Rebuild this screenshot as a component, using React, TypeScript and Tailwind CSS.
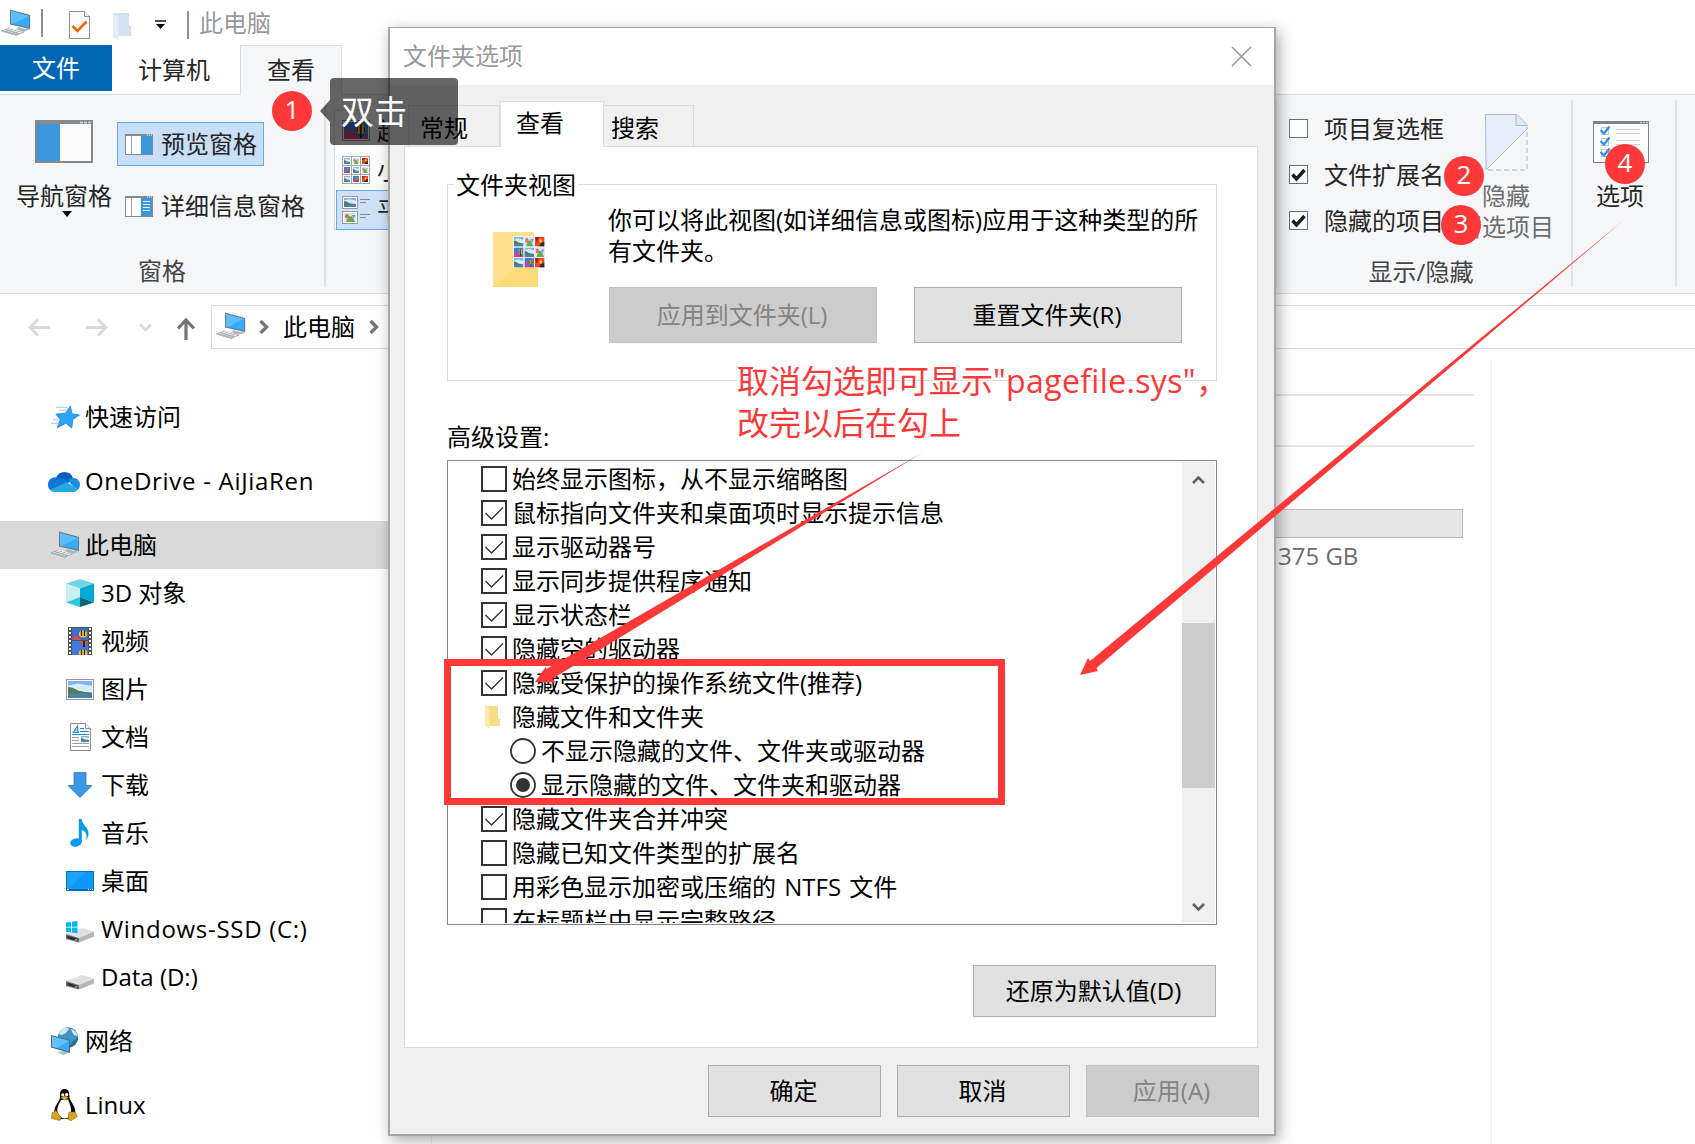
import React from "react";

const PcIcon: React.FC<{ className?: string }> = ({ className = "" }) => (
    <svg width="31" height="28" viewBox="0 0 31 28" className={className}>
        <path d="M0 22 L9 18.5 L25 23 L18 27 Z" fill="#eceff1" />
        <path d="M1 22.3 L9.5 19 M4 23.3 L13 20 M7.5 24.3 L17 21 M11 25.3 L20.5 22 M15 26.4 L24 23 M5 20.5 L19 25 M2 21.8 L17 26.4" stroke="#a3acb3" strokeWidth="1" fill="none" />
        <path d="M18 18 L25 20 L30 18.5 L29 21 L23 23 L17 20.5 Z" fill="#aeb7bd" />
        <path d="M27 4 L30.5 7 V20 L28 21 Z" fill="#cfd6da" />
        <path d="M10 0.5 L30 6 V20 L10 15.5 Z" fill="#6d7a82" />
        <path d="M11 2 L29 7 V18.6 L11 14.4 Z" fill="#35adff" />
        <path d="M11 2 L29 7 L13 14.8 L11 14.4 Z" fill="#5bbfff" />
    </svg>
);

const Picture: React.FC<{ x: number; y: number; w: number; h: number; kind: number }> = ({ x, y, w, h, kind }) => (
    <svg x={x} y={y} width={w} height={h} viewBox="0 0 20 14" preserveAspectRatio="none">
        {kind === 0 && (
            <>
                <rect width="20" height="14" fill="#7fb2f5" />
                <path d="M0 4 L8 2 L20 4 V10 H0 Z" fill="#d8ebf8" />
                <path d="M0 5 L4 5.5 L9 8 L14 9 L20 9.5 V11 H0 Z" fill="#4f7d5e" />
                <path d="M0 10.500 H20 V14 H0 Z" fill="#4a83a8" />
            </>
        )}
        {kind === 1 && (
            <>
                <rect width="20" height="14" fill="#cfe6fb" />
                <circle cx="5" cy="5" r="3.5" fill="#ef6c3a" />
                <path d="M3 14 L8 5 L13 5 L19 14 Z" fill="#6aa84f" />
                <path d="M13 3 L19 3 L16 9 Z" fill="#8d84e8" />
            </>
        )}
        {kind === 2 && (
            <>
                <rect width="20" height="14" fill="#e8472b" />
                <path d="M0 0 L8 0 L4 8 Z" fill="#b3130d" />
                <circle cx="12" cy="6" r="3" fill="#ffc13b" />
                <path d="M12 9 L20 7 V14 H9 Z" fill="#3b2a1b" />
            </>
        )}
        {kind === 3 && (
            <>
                <rect width="20" height="14" fill="#3f78e0" />
                <path d="M0 14 L3 5 L6 9 L8 6 L10 12 L20 12 V14 Z" fill="#e53d66" />
                <circle cx="14" cy="6" r="4" fill="#ffcb1f" />
                <path d="M13.200 2 H14.800 V13 H13.200 Z M10.500 4 H11.500 V8 H10.500 Z M16.500 4 H17.500 V8 H16.500 Z" fill="#26231f" />
            </>
        )}
    </svg>
);

const GRID = [0, 1, 2, 3, 0, 1, 0, 3, 2];

const WindowIcon: React.FC<{ lines?: boolean }> = ({ lines }) => (
    <svg width="28" height="21" viewBox="0 0 28 21">
        <rect x="0.5" y="0.5" width="27" height="20" fill="#fff" stroke="#86898c" />
        <rect width="28" height="2" fill="#86898c" />
        <path d="M22 1 h1 M24 1 h1 M26 1 h1" stroke="#fff" />
        <path d="M6.5 2 V20" stroke="#a5a7a9" />
        <rect x="16" y="2" width="11" height="18" fill="#3c96dd" />
        {lines && <path d="M18 5.5h7M18 8.5h7M18 11.5h7M18 14.5h7" stroke="#e6f2fc" />}
    </svg>
);

const DocIcon: React.FC<{ check?: boolean }> = ({ check }) => (
    <svg width="21" height="28" viewBox="0 0 21 28">
        <path d="M0.5 0.5 H15.5 L20.5 5.5 V27.5 H0.5 Z" fill="#fbfbfb" stroke="#8e8e8e" />
        <path d="M15.5 0.5 V5.5 H20.5" fill="#fff" stroke="#8e8e8e" />
        {check ? (
            <path d="M3.5 15 L8.5 20 L17.5 10.5" fill="none" stroke="#f4640e" strokeWidth="2.6" />
        ) : (
            <>
                <path d="M3.5 9 L7.5 3 L8 9 M5 7 H8 M2.5 9.3 H9" stroke="#2d8fc9" fill="none" strokeWidth="1.2" />
                <path d="M10 5.5h4M10 8.5h9M2 11.5h17" stroke="#1b8ad1" />
                <path d="M2 14.5h7M2 17.5h7M2 20.5h17M2 23.5h17" stroke="#a2a2a2" />
                <Picture x={11} y={13} w={8} h={6} kind={0} />
            </>
        )}
    </svg>
);

const Drive: React.FC<{ windows?: boolean }> = ({ windows }) => (
    <svg width="28" height="22" viewBox="0 0 28 22" className={windows ? "mt-[5px]" : "mt-1"}>
        <path d="M0 13 L16 7 L28 10.5 L13 17 Z" fill="#dfe0e3" />
        <path d="M13 17 L28 10.5 V15.5 L13 21.5 Z" fill="#b4b5b8" />
        <path d="M0 13 L13 17 V21.5 L0 18 Z" fill="#6b6d70" />
        <path d="M1.5 14.7 L11.5 17.7 V20 L1.5 17.2 Z" fill="#27292b" />
        <path d="M9 18.4 L11 19" stroke="#42d44c" strokeWidth="1.6" />
        {windows && <path d="M0 1.6 L5 1 V5.7 H0 Z M6 0.8 L11.5 0 V5.7 H6 Z M0 6.6 H5 V11.3 L0 10.7 Z M6 6.6 H11.5 V12.2 L6 11.5 Z" fill="#00b8f1" />}
    </svg>
);

const StarIcon = () => (
    <svg width="30" height="24" viewBox="0 0 30 24" className="ml-[3px]">
        <path d="M20 0.5 L21.6 8.500 L29.5 10 L22.5 14.5 L21.500 23.500 L15.5 18.500 L6.500 23 L9.5 14.500 L5 9 L15 8 Z" fill="#2ba4f5" stroke="#1986d4" strokeWidth="0.8" />
        <path d="M5 2 H17 M8 5 H16 M2 15 H8 M0 18.5 H7" stroke="#9cc9ea" />
    </svg>
);

const CloudIcon = () => (
    <svg width="32" height="21" viewBox="0 0 32 21">
        <path d="M8 7 A9 9 0 0 1 25 7 L19 13 Z" fill="#0a5fb4" />
        <path d="M7 21 A7.200 7.200 0 0 1 0 13.500 A7 7 0 0 1 9.500 6.800 C15 5.500 18 10 21 11 L9 20 Z" fill="#0d78d4" />
        <path d="M20 10 C23 5 31 6 32 13 C32 16 31 18 29 19 Z" fill="#1490df" />
        <path d="M2.500 18.800 L18.500 11.300 L30.500 18 C28.500 20.500 27 21 25 21 H7.500 C5.500 21 4 20.500 2.500 18.800 Z" fill="#28a8ea" />
    </svg>
);

const CubeIcon = () => (
    <svg width="28" height="28" viewBox="0 0 28 28">
        <path d="M14 0 L28 4.500 L14 9.500 L0 4.500 Z" fill="#6fd6e4" />
        <path d="M0 4.500 L14 9.500 V18 L0 23.500 Z" fill="#c5eff1" />
        <path d="M28 4.500 L14 9.500 V18 L28 23.500 Z" fill="#00a8d8" />
        <path d="M0 23.500 L14 18 V28 Z" fill="#2fc8d8" />
        <path d="M28 23.500 L14 18 V28 Z" fill="#00687f" />
    </svg>
);

const FilmIcon = () => (
    <svg width="24" height="28" viewBox="0 0 24 28">
        <rect width="24" height="28" fill="#55504f" />
        <path d="M2 1 V28 M22 1 V28" stroke="#fff" strokeWidth="2" strokeDasharray="2 2" />
        <rect x="4" y="1" width="16" height="12" fill="#3a6fd0" />
        <rect x="4" y="14" width="16" height="14" fill="#3f7ae0" />
        <path d="M4 13 L7 8 L11 11 L14 13 Z" fill="#e8445a" />
        {[7, 26].map((y) => (
            <g key={y}>
                <ellipse cx="15" cy={y} rx="4.200" ry="3.600" fill="#f5c21a" />
                <path d={`M13.500 ${y - 3.5} V${y + 2} M16.500 ${y - 3.5} V${y + 2}`} stroke="#25201d" strokeWidth="1.200" />
            </g>
        ))}
        <path d="M12 14 H20 L17 19 H15 Z" fill="#e3552b" />
        <path d="M15 14 V20 H17 V14" fill="#2d221c" />
    </svg>
);

const PictureIcon = () => (
    <svg width="28" height="21" viewBox="0 0 28 21">
        <rect x="0.500" y="0.500" width="27" height="20" fill="#fff" stroke="#9a9a9a" />
        <Picture x={2} y={2} w={24} h={17} kind={0} />
    </svg>
);

const DownloadIcon = () => (
    <svg width="26" height="26" viewBox="0 0 26 26">
        <path d="M7 0.500 H19 V13.500 H25 L13 25.500 L1 13.500 H7 Z" fill="#3d96e6" stroke="#2a7fcb" strokeWidth="0.800" />
    </svg>
);

const MusicIcon = () => (
    <svg width="20" height="28" viewBox="0 0 20 28">
        <ellipse cx="6" cy="23.500" rx="5.800" ry="4.200" fill="#0a99f2" transform="rotate(-12 6 23.500)" />
        <path d="M8.800 0 H11.500 C12 6 19 8 18.500 15 C18.300 18 17 20 16 21 C18 15 15 12 11.800 11 V23 H8.800 Z" fill="#0a99f2" />
    </svg>
);

const DesktopIcon = () => (
    <svg width="28" height="20" viewBox="0 0 28 20">
        <rect x="0.500" y="0.500" width="27" height="19" fill="#1ea2fb" stroke="#0f6fb5" />
        <path d="M20 1 H27 V17.500 H3 Z" fill="#0f98fb" />
        <path d="M1 18.500 H27" stroke="#0b5f9e" />
        <path d="M1 18.500 h1.500 M22 18.500h1M24 18.500h1M26 18.500h1" stroke="#fff" />
    </svg>
);

const NetworkIcon = () => (
    <svg width="28" height="28" viewBox="0 0 28 28" className="ml-[2px]">
        <circle cx="17" cy="10.500" r="10.300" fill="#3f93bf" />
        <path d="M9 4 C13 -1 17 1 18 2 L15 6 L11 8 L7 7 Z M20 2 C24 3 26 6 27 9 L23 8 L21 5 Z" fill="#cfe5ef" />
        <path d="M17 21 C24 20 27 15 27 10 C24 14 22 12 20 17 Z" fill="#2a7196" />
        <path d="M6 25 L14 24 L18 26 L12 28 Z" fill="#b4bdc2" />
        <path d="M0 8 L19 13 V26 L0 20.500 Z" fill="#56666f" />
        <path d="M1 9.300 L18 13.800 V24.500 L1 19.700 Z" fill="#35adff" />
        <path d="M1 9.300 L18 13.800 L6 21 L1 19.700 Z" fill="#62c2ff" />
    </svg>
);

const TuxIcon = () => (
    <svg width="27" height="32" viewBox="0 0 27 32">
        <path d="M13.500 0 C17 0 18.500 2.500 18.300 6.500 C18.200 10 20 12 22 15.500 C24 19 25.500 24 23 27 L17 30 H9 L4 26 C2 22 4.500 17 7 13 C9 10 9 9 9 6 C8.800 2 10.500 0 13.500 0 Z" fill="#0b0b0b" />
        <path d="M10 11 C8 15 5.500 19 6.500 23 C8 26 10 29.500 14 29.500 C19 29 20.500 25 20 20 C19.500 16 18 13 17 10.500 Z" fill="#fff" />
        <circle cx="11.700" cy="5.700" r="1.500" fill="#fff" />
        <circle cx="15.600" cy="5.700" r="1.700" fill="#fff" />
        <path d="M9.700 8.500 L13 7 L17.300 8.500 L13.500 11.300 Z" fill="#e9a820" />
        <path d="M1 24 L5 21.500 L10 28.500 L9 31.500 L0.500 29.500 Z" fill="#dba31c" stroke="#7b5a10" strokeWidth="0.500" />
        <path d="M18 23 L24 23 L26.500 27.500 L20 31.700 L17 30.500 Z" fill="#dba31c" stroke="#7b5a10" strokeWidth="0.500" />
    </svg>
);

const OptionsIcon = () => (
    <svg width="56" height="42" viewBox="0 0 56 42">
        <rect x="0.500" y="0.500" width="55" height="41" fill="#fcfcfc" stroke="#7e8388" />
        <rect width="56" height="3" fill="#7e8388" />
        <path d="M47 1.500h2M50 1.500h2M53 1.500h2" stroke="#ddd" />
        {[9, 20, 31].map((y) => (
            <g key={y}>
                <rect x="8.500" y={y - 2.500} width="7" height="7" fill="#fff" stroke="#c9c9c9" />
                <path d={`M7.500 ${y} l3.500 3.500 l5.500 -7`} stroke="#2f93e6" strokeWidth="2.400" fill="none" />
                <path d={`M23 ${y - 0.5}h24M23 ${y + 3.5}h24`} stroke="#cfcfcf" />
            </g>
        ))}
    </svg>
);

const HiddenFileIcon = () => (
    <svg width="43" height="57" viewBox="0 0 43 57">
        <path d="M0.500 0.500 H32 L42 10.500 V15 L1 56 Z" fill="#e6eefa" stroke="#a9bad5" />
        <path d="M31 0.500 V11.500 H42" fill="#dce7f8" stroke="#a9bad5" />
        <path d="M42 18 V56 H2" fill="none" stroke="#a9bad5" strokeDasharray="5 3" />
    </svg>
);

const FolderViewIcon = () => (
    <svg width="53" height="56" viewBox="0 0 53 56">
        <path d="M0 0 H41 V36 H45 V55 H0 Z" fill="#ffe08a" />
        <path d="M0 55 L41 20 V36 H45 V55 Z" fill="#ffdb78" />
        <rect x="20" y="4" width="32" height="32" fill="#eef0f2" />
        {GRID.map((kind, i) => (
            <Picture key={i} x={21 + (i % 3) * 10.5} y={5 + Math.floor(i / 3) * 10.5} w={9.5} h={9.5} kind={kind} />
        ))}
    </svg>
);

const Chevron: React.FC<{ d: string; w: number; h: number; color: string; stroke?: number }> = ({ d, w, h, color, stroke = 3 }) => (
    <svg width={w} height={h} viewBox={`0 0 ${w} ${h}`}>
        <path d={d} fill="none" stroke={color} strokeWidth={stroke} />
    </svg>
);

type Place = { icon: React.ReactNode; name: string; level: number; gap?: boolean; active?: boolean; wide?: boolean };

const sidebar: Place[] = [
    { icon: <StarIcon />, name: "快速访问", level: 1 },
    { icon: <CloudIcon />, name: "OneDrive - AiJiaRen", level: 1, gap: true, wide: true },
    { icon: <PcIcon />, name: "此电脑", level: 1, gap: true, active: true },
    { icon: <CubeIcon />, name: "3D 对象", level: 2 },
    { icon: <FilmIcon />, name: "视频", level: 2 },
    { icon: <PictureIcon />, name: "图片", level: 2 },
    { icon: <DocIcon />, name: "文档", level: 2 },
    { icon: <DownloadIcon />, name: "下载", level: 2 },
    { icon: <MusicIcon />, name: "音乐", level: 2 },
    { icon: <DesktopIcon />, name: "桌面", level: 2 },
    { icon: <Drive windows />, name: "Windows-SSD (C:)", level: 2, wide: true },
    { icon: <Drive />, name: "Data (D:)", level: 2 },
    { icon: <NetworkIcon />, name: "网络", level: 1, gap: true },
    { icon: <TuxIcon />, name: "Linux", level: 1, gap: true },
];

const settings = [
    { type: "check", on: false, text: "始终显示图标，从不显示缩略图" },
    { type: "check", on: true, text: "鼠标指向文件夹和桌面项时显示提示信息" },
    { type: "check", on: true, text: "显示驱动器号" },
    { type: "check", on: true, text: "显示同步提供程序通知" },
    { type: "check", on: true, text: "显示状态栏" },
    { type: "check", on: true, text: "隐藏空的驱动器" },
    { type: "check", on: true, text: "隐藏受保护的操作系统文件(推荐)" },
    { type: "folder", on: false, text: "隐藏文件和文件夹" },
    { type: "radio", on: false, text: "不显示隐藏的文件、文件夹或驱动器" },
    { type: "radio", on: true, text: "显示隐藏的文件、文件夹和驱动器" },
    { type: "check", on: true, text: "隐藏文件夹合并冲突" },
    { type: "check", on: false, text: "隐藏已知文件类型的扩展名" },
    { type: "check", on: false, text: "用彩色显示加密或压缩的 NTFS 文件" },
    { type: "check", on: false, text: "在标题栏中显示完整路径" },
];

const SettingMark: React.FC<{ type: string; on: boolean }> = ({ type, on }) => {
    if (type === "folder") {
        return (
            <svg width="26" height="26" viewBox="0 0 26 26">
                <path d="M4 2 H17 V15 H19 V22 H4 Z" fill="#f9dc84" />
                <path d="M4 2 L8.500 4 V25 L4 22 Z" fill="#ffeaa8" />
            </svg>
        );
    }
    if (type === "radio") {
        return (
            <svg width="26" height="26" viewBox="0 0 26 26">
                <circle cx="13" cy="13" r="12" fill="#fff" stroke="#333" strokeWidth="1.800" />
                {on && <circle cx="13" cy="13" r="7" fill="#333" />}
            </svg>
        );
    }
    return (
        <svg width="26" height="26" viewBox="0 0 26 26">
            <rect x="1" y="1" width="24" height="24" fill="#fff" stroke="#333" strokeWidth="2" />
            {on && <path d="M4.500 13 L10.500 19 L22 7.500" fill="none" stroke="#333" strokeWidth="1.400" />}
        </svg>
    );
};

const Button: React.FC<{ text: string; className: string; disabled?: boolean }> = ({ text, className, disabled }) => (
    <div className={`flex items-center justify-center border pr-[2px] ${disabled ? "border-[#bfbfbf] bg-[#ccc] text-[#838383]" : "border-[#adadad] bg-[#e1e1e1] text-black"} ${className}`}>
        {text}
    </div>
);

const RibbonCheck: React.FC<{ text: string; on?: boolean }> = ({ text, on }) => (
    <div className="flex h-[46px] items-center gap-4">
        <svg width="19" height="19" viewBox="0 0 19 19" className="-mt-px">
            <rect x="0.500" y="0.500" width="18" height="18" fill="#fff" stroke="#56739f" />
            {on && <path d="M3.500 9.500 L7.500 14 L15.500 5" fill="none" stroke="#1d1d1d" strokeWidth="3.400" />}
        </svg>
        <span>{text}</span>
    </div>
);

const Divider = () => <div className="mt-[5px] h-[187px] w-[2px] shrink-0 bg-[#e2e3e4]" />;

const Badge: React.FC<{ n: number; className: string }> = ({ n, className }) => (
    <div className={`absolute flex size-10 items-center justify-center rounded-full bg-[#fc3938] pb-[5px] text-[26px] leading-none text-white ${className}`}>{n}</div>
);

const Ribbon = () => (
    <div className="flex h-[200px] border-y border-[#dadbdc] bg-[#f5f6f7] text-[#262626]">
        <div className="flex w-[324px] flex-col">
            <div className="flex h-[156px]">
                <div className="flex w-[117px] flex-col items-center pt-[25px] pl-[11px]">
                    <svg width="58" height="43" viewBox="0 0 58 43">
                        <rect x="1" y="1" width="56" height="41" fill="#fbfbfb" stroke="#86898c" strokeWidth="2" />
                        <rect width="58" height="4" fill="#86898c" />
                        <path d="M45 2.500h3M49 2.500h3M53 2.500h3" stroke="#c7c9cb" strokeWidth="2" />
                        <rect x="2" y="4" width="23" height="37" fill="#3c96dd" />
                    </svg>
                    <span className="mt-[17px] leading-8 whitespace-nowrap">导航窗格</span>
                    <svg width="10" height="6" viewBox="0 0 10 6" className="-mt-px ml-[6px]">
                        <path d="M0 0 H10 L5 6 Z" fill="#000" />
                    </svg>
                </div>
                <div className="flex flex-col items-start gap-[18px] pt-[27px]">
                    <div className="flex h-[44px] w-[147px] items-center gap-2 border border-[#66a7e8] bg-[#c9dff7] pl-[7px] whitespace-nowrap">
                        <WindowIcon />
                        预览窗格
                    </div>
                    <div className="flex h-[44px] items-center gap-2 pl-2 whitespace-nowrap">
                        <WindowIcon lines />
                        详细信息窗格
                    </div>
                </div>
            </div>
            <div className="flex h-[40px] items-center justify-center text-[#444]">窗格</div>
        </div>
        <Divider />
        <div className="mt-[15px] ml-2 h-[120px] w-[200px] border border-[#dadbdc] bg-[#fcfcfd]">
            <div className="flex h-[39px] items-center gap-[7px] pl-[7px]">
                <svg width="28" height="21" viewBox="0 0 28 21">
                    <rect x="0.500" y="0.500" width="27" height="20" fill="#fff" stroke="#9a9a9a" />
                    <Picture x={2} y={2} w={24} h={17} kind={3} />
                </svg>
                超大图标
            </div>
            <div className="flex h-[40px] items-center gap-[7px] pl-[7px]">
                <svg width="28" height="28" viewBox="0 0 28 28">
                    <rect width="28" height="28" fill="#a3a5a8" />
                    {GRID.map((kind, i) => (
                        <g key={i}>
                            <rect x={1 + (i % 3) * 9} y={1 + Math.floor(i / 3) * 9} width="8" height="8" fill="#fff" />
                            <Picture x={2 + (i % 3) * 9} y={2 + Math.floor(i / 3) * 9} w={6} h={6} kind={kind} />
                        </g>
                    ))}
                </svg>
                小图标
            </div>
            <div className="ml-px flex h-[40px] items-center gap-[7px] border border-[#66a7e8] bg-[#cde2fa] pl-[5px]">
                <svg width="28" height="28" viewBox="0 0 28 28">
                    {[0, 1].map((k) => (
                        <g key={k}>
                            <rect x="0.500" y={0.5 + k * 15} width="15" height="12" fill="#fff" stroke="#9a9a9a" />
                            <Picture x={2} y={2 + k * 15} w={12} h={9} kind={k} />
                            <path d={`M18 ${3.5 + k * 15}h10M18 ${6.5 + k * 15}h6`} stroke="#888" />
                        </g>
                    ))}
                </svg>
                平铺
            </div>
        </div>
        <div className="ml-auto flex">
            <Divider />
            <div className="flex w-[294px] flex-col">
                <div className="flex h-[156px]">
                    <div className="w-[178px] pt-[11px] pl-3 whitespace-nowrap">
                        <RibbonCheck text="项目复选框" />
                        <RibbonCheck text="文件扩展名" on />
                        <RibbonCheck text="隐藏的项目" on />
                    </div>
                    <div className="flex w-[102px] flex-col items-center pt-[19px] leading-[31px] whitespace-nowrap text-[#6d6d6d]">
                        <HiddenFileIcon />
                        <span className="mt-[9px]">隐藏</span>
                        <span>所选项目</span>
                    </div>
                </div>
                <div className="flex h-[41px] items-center justify-center pr-[6px] text-[#444]">显示/隐藏</div>
            </div>
            <Divider />
            <div className="flex w-[102px] flex-col items-center pt-[26px] pr-[6px]">
                <OptionsIcon />
                <span className="mt-[17px] mr-[2px] leading-8">选项</span>
            </div>
            <Divider />
            <div className="w-[18px]" />
        </div>
    </div>
);

const Dialog = () => (
    <div className="absolute top-[27px] left-[388px] flex h-[1109px] w-[888px] flex-col border-2 border-t border-[#a6a6a6] bg-[#f0f0f0] text-black shadow-[3px_4px_14px_rgba(0,0,0,0.35)]">
        <div className="flex h-[57px] items-center justify-between bg-white pr-[22px] pl-[13px] text-[#999]">
            <span className="-mt-px">文件夹选项</span>
            <Chevron d="M1 1 L20 20 M20 1 L1 20" w={21} h={21} color="#999" stroke={1.6} />
        </div>
        <div className="flex h-[61px] items-end pl-[18px]">
            <div className="h-[41px] w-[92px] border border-b-0 border-[#dcdcdc] pt-1 pl-[11px]">常规</div>
            <div className="z-10 -mb-px h-[46px] w-[104px] border border-b-0 border-[#dcdcdc] bg-white pt-[3px] pl-[15px]">查看</div>
            <div className="h-[41px] w-[90px] border border-b-0 border-l-0 border-[#dcdcdc] pt-1 pl-[7px]">搜索</div>
        </div>
        <div className="mr-[16px] ml-[14px] flex h-[902px] flex-col border border-[#dcdcdc] bg-white pr-[40px] pl-[42px]">
            <fieldset className="mt-[20px] flex h-[214px] gap-[62px] border border-[#dcdcdc] pl-[45px]">
                <legend className="-ml-[39px] px-[2px] leading-[35px]">文件夹视图</legend>
                <div className="pt-[30px]">
                    <FolderViewIcon />
                </div>
                <div className="flex flex-col pt-[2px]">
                    <p className="w-[600px] leading-[31px]">
                        你可以将此视图(如详细信息或图标)应用于这种类型的所
                        <br />
                        有文件夹。
                    </p>
                    <div className="mt-[21px] ml-px flex gap-[37px]">
                        <Button text="应用到文件夹(L)" className="h-[56px] w-[268px]" disabled />
                        <Button text="重置文件夹(R)" className="h-[56px] w-[268px]" />
                    </div>
                </div>
            </fieldset>
            <div className="mt-[38px] h-[41px] leading-[36px]">高级设置:</div>
            <div className="flex h-[465px] justify-between border border-[#828790] p-px">
                <div className="h-full overflow-hidden pl-[32px]">
                    {settings.map((s) => (
                        <div key={s.text} className={`flex h-[34px] items-center whitespace-nowrap ${s.type === "radio" ? "gap-[5px] pl-[29px]" : "gap-[5px]"}`}>
                            <SettingMark type={s.type} on={s.on} />
                            <span className={s.text.includes("NTFS") ? "[word-spacing:2px]" : ""}>{s.text}</span>
                        </div>
                    ))}
                </div>
                <div className="flex w-[33px] flex-col items-center justify-between bg-[#f0f0f0] pt-[13px] pb-[11px]">
                    <Chevron d="M1 8 L6.5 2.500 L12 8" w={13} h={10} color="#606060" stroke={2.6} />
                    <div className="mt-[15px] mb-auto h-[165px] w-[33px] translate-y-[123px] bg-[#cdcdcd]" />
                    <Chevron d="M1 2 L6.5 7.500 L12 2" w={13} h={10} color="#606060" stroke={2.6} />
                </div>
            </div>
            <Button text="还原为默认值(D)" className="mt-[40px] mr-px h-[52px] w-[243px] self-end" />
        </div>
        <div className="mt-[17px] flex justify-end gap-4 pr-[15px]">
            <Button text="确定" className="h-[52px] w-[173px]" />
            <Button text="取消" className="h-[52px] w-[173px]" />
            <Button text="应用(A)" className="h-[52px] w-[173px]" disabled />
        </div>
    </div>
);

const Annotations = () => (
    <div className="absolute inset-0 z-20">
        <div className="absolute top-[78px] left-[330px] flex h-[67px] w-[128px] items-center rounded bg-black/60 pl-[11px] text-[33px] leading-none text-white">双击</div>
        <svg width="10" height="22" viewBox="0 0 10 22" className="absolute top-[100px] left-[320px]">
            <path d="M10 0 V22 L0 11 Z" fill="#000" fillOpacity="0.6" />
        </svg>
        <Badge n={1} className="top-[91px] left-[272px]" />
        <Badge n={2} className="top-[156px] left-[1444px]" />
        <Badge n={3} className="top-[205px] left-[1441px]" />
        <Badge n={4} className="top-[144px] left-[1605px]" />
        <div className="absolute top-[360px] left-[737px] text-[32px] leading-[42px] whitespace-nowrap text-[#fc3938]">
            取消勾选即可显示<span className="tracking-[0.35px]">"pagefile.sys"</span>，
            <br />
            改完以后在勾上
        </div>
        <div className="absolute top-[659px] left-[444px] h-[146px] w-[561px] border-[7px] border-[#fc3938]" />
        <svg width="1695" height="1144" viewBox="0 0 1695 1144" className="absolute top-0 left-0">
            <path d="M923.500 452 L552 679 L556 682.500 L535 682 L545.500 667 L546.500 669 Z" fill="#fc3938" />
            <path d="M1625 219 L1096.500 668 L1098 671 L1080 675 L1088 658 L1090 661 Z" fill="#fc3938" />
        </svg>
    </div>
);

export default function App() {
    return (
        <div className="relative flex h-[1144px] w-[1695px] flex-col overflow-hidden bg-white font-['Open_Sans','Noto_Sans_CJK_SC',sans-serif] text-[24px] leading-9 text-black">
            <div className="flex h-[45px] shrink-0 items-center">
                <PcIcon />
                <div className="ml-[10px] h-[28px] w-[2px] bg-[#8f8f8f]" />
                <div className="mt-[5px] ml-[26px]">
                    <DocIcon check />
                </div>
                <svg width="19" height="28" viewBox="0 0 19 28" className="mt-2 ml-[23px]">
                    <path d="M0 0 H16 V13 H18 V23 H0 Z" fill="#d3e0f0" />
                    <path d="M0 0 L5.500 4 V27 L0 24 Z" fill="#e4edf8" />
                </svg>
                <svg width="11" height="9" viewBox="0 0 11 9" className="mt-1 ml-[23px]">
                    <path d="M0 1 H11" stroke="#000" strokeWidth="1.400" />
                    <path d="M1 4 H10 L5.500 9 Z" />
                </svg>
                <div className="mt-1 ml-[21px] h-[28px] w-[2px] bg-[#8f8f8f]" />
                <span className="ml-[10px] text-[#999]">此电脑</span>
            </div>
            <div className="flex h-[49px] shrink-0 text-[#262626]">
                <div className="flex h-[46px] w-[112px] items-center justify-center bg-[#0067b4] text-white">文件</div>
                <div className="flex w-[128px] items-center justify-center pr-1">计算机</div>
                <div className="z-10 -mb-px flex w-[102px] items-center justify-center border border-b-0 border-[#dadbdc] bg-[#f5f6f7] pb-[2px]">查看</div>
            </div>
            <Ribbon />
            <div className="flex h-[66px] shrink-0 items-center pl-[28px]">
                <Chevron d="M22 9.500 H2 M10 1.500 L2 9.500 L10 17.500" w={22} h={19} color="#d9d9d9" />
                <div className="ml-[36px]">
                    <Chevron d="M0 9.500 H20 M12 1.500 L20 9.500 L12 17.500" w={22} h={19} color="#d9d9d9" />
                </div>
                <div className="ml-[31px]">
                    <Chevron d="M1 1.500 L6.500 7 L12 1.500" w={13} h={9} color="#d9d9d9" stroke={2.6} />
                </div>
                <div className="mt-1 ml-[25px]">
                    <Chevron d="M9 22 V2 M1 10.500 L9 2 L17 10.500" w={18} h={22} color="#757575" stroke={3.2} />
                </div>
                <div className="ml-4 flex h-[44px] flex-1 items-center border border-r-0 border-[#d9d9d9] pl-[3px]">
                    <PcIcon className="-mt-[2px]" />
                    <div className="ml-[13px]">
                        <Chevron d="M1.500 1 L7.500 7 L1.500 13" w={10} h={14} color="#757575" stroke={3.4} />
                    </div>
                    <span className="ml-[14px]">此电脑</span>
                    <div className="ml-[14px]">
                        <Chevron d="M1.500 1 L7.500 7 L1.500 13" w={10} h={14} color="#757575" stroke={3.4} />
                    </div>
                </div>
            </div>
            <div className="flex flex-1">
                <div className="w-[432px] shrink-0 border-r border-[#f0f0f0] pt-[33px]">
                    {sidebar.map((p) => (
                        <div key={p.name} className={`flex h-12 items-center ${p.gap ? "mt-4" : ""} ${p.active ? "bg-[#d9d9d9]" : ""} ${p.level === 1 ? "pl-12" : "pl-16"}`}>
                            <div className="flex w-8 items-center justify-center">{p.icon}</div>
                            <span className={`ml-[5px] ${p.wide ? "tracking-[0.7px]" : ""}`}>{p.name}</span>
                        </div>
                    ))}
                </div>
                <div className="w-[1060px] shrink-0 border-r-2 border-[#f5f5f5] pt-[34px] pr-4">
                    <div className="h-[2px] bg-[#e5e5e5]" />
                    <div className="mt-[49px] h-[2px] bg-[#e5e5e5]" />
                    <div className="mt-[62px] mr-[11px] h-[29px] border border-[#bcbcbc] bg-[#e6e6e6]" />
                    <div className="pl-[846px] text-[#6d6d6d]">375 GB</div>
                </div>
            </div>
            <Dialog />
            <Annotations />
        </div>
    );
}
